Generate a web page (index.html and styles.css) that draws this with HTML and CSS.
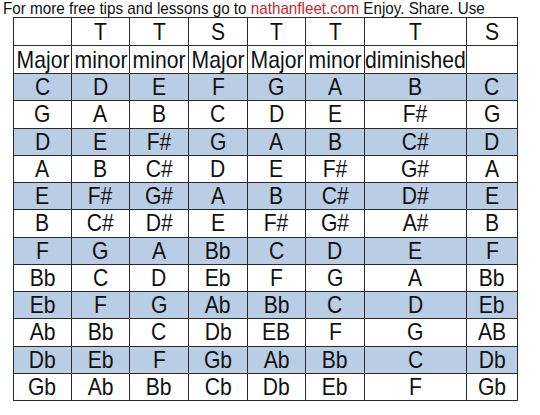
FILE: index.html
```html
<!DOCTYPE html>
<html>
<head>
<meta charset="utf-8">
<link rel="stylesheet" href="styles.css">
</head>
<body>
<div class="page">
  <p class="intro"><span class="intro-text">For more free tips and lessons go to <span class="link">nathanfleet.com</span> Enjoy. Share. Use</span></p>
  <table class="scales">
    <colgroup>
      <col class="c58"><col class="c58"><col class="c59"><col class="c59"><col class="c58"><col class="c59"><col class="c102"><col class="c51">
    </colgroup>
    <tr class="head"><td></td><td><div class="cell"><span>T</span></div></td><td><div class="cell"><span>T</span></div></td><td><div class="cell"><span>S</span></div></td><td><div class="cell"><span>T</span></div></td><td><div class="cell"><span>T</span></div></td><td><div class="cell"><span>T</span></div></td><td><div class="cell"><span>S</span></div></td></tr>
    <tr class="head"><td><div class="cell"><span>Major</span></div></td><td><div class="cell"><span>minor</span></div></td><td><div class="cell"><span>minor</span></div></td><td><div class="cell"><span>Major</span></div></td><td><div class="cell"><span>Major</span></div></td><td><div class="cell"><span>minor</span></div></td><td><div class="cell"><span>diminished</span></div></td><td></td></tr>
    <tr class="blue"><td><div class="cell"><span>C</span></div></td><td><div class="cell"><span>D</span></div></td><td><div class="cell"><span>E</span></div></td><td><div class="cell"><span>F</span></div></td><td><div class="cell"><span>G</span></div></td><td><div class="cell"><span>A</span></div></td><td><div class="cell"><span>B</span></div></td><td><div class="cell"><span>C</span></div></td></tr>
    <tr><td><div class="cell"><span>G</span></div></td><td><div class="cell"><span>A</span></div></td><td><div class="cell"><span>B</span></div></td><td><div class="cell"><span>C</span></div></td><td><div class="cell"><span>D</span></div></td><td><div class="cell"><span>E</span></div></td><td><div class="cell"><span>F#</span></div></td><td><div class="cell"><span>G</span></div></td></tr>
    <tr class="blue"><td><div class="cell"><span>D</span></div></td><td><div class="cell"><span>E</span></div></td><td><div class="cell"><span>F#</span></div></td><td><div class="cell"><span>G</span></div></td><td><div class="cell"><span>A</span></div></td><td><div class="cell"><span>B</span></div></td><td><div class="cell"><span>C#</span></div></td><td><div class="cell"><span>D</span></div></td></tr>
    <tr><td><div class="cell"><span>A</span></div></td><td><div class="cell"><span>B</span></div></td><td><div class="cell"><span>C#</span></div></td><td><div class="cell"><span>D</span></div></td><td><div class="cell"><span>E</span></div></td><td><div class="cell"><span>F#</span></div></td><td><div class="cell"><span>G#</span></div></td><td><div class="cell"><span>A</span></div></td></tr>
    <tr class="blue"><td><div class="cell"><span>E</span></div></td><td><div class="cell"><span>F#</span></div></td><td><div class="cell"><span>G#</span></div></td><td><div class="cell"><span>A</span></div></td><td><div class="cell"><span>B</span></div></td><td><div class="cell"><span>C#</span></div></td><td><div class="cell"><span>D#</span></div></td><td><div class="cell"><span>E</span></div></td></tr>
    <tr><td><div class="cell"><span>B</span></div></td><td><div class="cell"><span>C#</span></div></td><td><div class="cell"><span>D#</span></div></td><td><div class="cell"><span>E</span></div></td><td><div class="cell"><span>F#</span></div></td><td><div class="cell"><span>G#</span></div></td><td><div class="cell"><span>A#</span></div></td><td><div class="cell"><span>B</span></div></td></tr>
    <tr class="blue"><td><div class="cell"><span>F</span></div></td><td><div class="cell"><span>G</span></div></td><td><div class="cell"><span>A</span></div></td><td><div class="cell"><span>Bb</span></div></td><td><div class="cell"><span>C</span></div></td><td><div class="cell"><span>D</span></div></td><td><div class="cell"><span>E</span></div></td><td><div class="cell"><span>F</span></div></td></tr>
    <tr><td><div class="cell"><span>Bb</span></div></td><td><div class="cell"><span>C</span></div></td><td><div class="cell"><span>D</span></div></td><td><div class="cell"><span>Eb</span></div></td><td><div class="cell"><span>F</span></div></td><td><div class="cell"><span>G</span></div></td><td><div class="cell"><span>A</span></div></td><td><div class="cell"><span>Bb</span></div></td></tr>
    <tr class="blue"><td><div class="cell"><span>Eb</span></div></td><td><div class="cell"><span>F</span></div></td><td><div class="cell"><span>G</span></div></td><td><div class="cell"><span>Ab</span></div></td><td><div class="cell"><span>Bb</span></div></td><td><div class="cell"><span>C</span></div></td><td><div class="cell"><span>D</span></div></td><td><div class="cell"><span>Eb</span></div></td></tr>
    <tr><td><div class="cell"><span>Ab</span></div></td><td><div class="cell"><span>Bb</span></div></td><td><div class="cell"><span>C</span></div></td><td><div class="cell"><span>Db</span></div></td><td><div class="cell"><span>EB</span></div></td><td><div class="cell"><span>F</span></div></td><td><div class="cell"><span>G</span></div></td><td><div class="cell"><span>AB</span></div></td></tr>
    <tr class="blue"><td><div class="cell"><span>Db</span></div></td><td><div class="cell"><span>Eb</span></div></td><td><div class="cell"><span>F</span></div></td><td><div class="cell"><span>Gb</span></div></td><td><div class="cell"><span>Ab</span></div></td><td><div class="cell"><span>Bb</span></div></td><td><div class="cell"><span>C</span></div></td><td><div class="cell"><span>Db</span></div></td></tr>
    <tr><td><div class="cell"><span>Gb</span></div></td><td><div class="cell"><span>Ab</span></div></td><td><div class="cell"><span>Bb</span></div></td><td><div class="cell"><span>Cb</span></div></td><td><div class="cell"><span>Db</span></div></td><td><div class="cell"><span>Eb</span></div></td><td><div class="cell"><span>F</span></div></td><td><div class="cell"><span>Gb</span></div></td></tr>
  </table>
</div>
</body>
</html>
```

FILE: styles.css
```css
html, body {
  margin: 0;
  padding: 0;
  background: #ffffff;
}

.page {
  width: 540px;
  height: 415px;
  font-family: "Liberation Sans", Arial, sans-serif;
  color: #111;
}

.intro {
  margin: 0;
  height: 17px;
  padding-left: 3px;
  font-size: 17px;
  line-height: 17px;
  white-space: nowrap;
}

.intro-text {
  display: inline-block;
  transform: scaleX(0.895);
  transform-origin: left center;
}

.link {
  color: #c3272e;
}

.scales {
  margin-left: 13px;
  border-collapse: collapse;
  table-layout: fixed;
  width: 504px;
}

.c58 { width: 58px; }
.c59 { width: 59px; }
.c102 { width: 102px; }
.c51 { width: 51px; }

.scales td {
  border: 1px solid #2a2a2a;
  padding: 0;
  height: 26.25px;
  vertical-align: middle;
  font-size: 24px;
  line-height: 16px;
}

.scales tr.head td {
  height: 27px;
}

.cell {
  display: flex;
  justify-content: center;
  align-items: center;
  height: 16px;
  white-space: nowrap;
}

.cell span {
  display: block;
  flex: none;
  transform: scaleX(0.88);
}

.scales tr.blue td {
  background: #b9cde5;
}
```
